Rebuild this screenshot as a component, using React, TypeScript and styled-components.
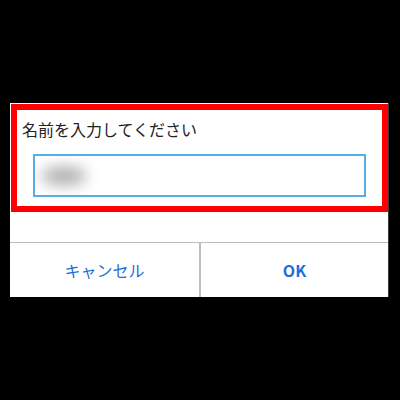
import React from "react";
import styled, { createGlobalStyle } from "styled-components";

const GlobalStyle = createGlobalStyle`
  html, body {
    margin: 0;
    padding: 0;
    background: #000;
  }
`;

const App = () => {
	return (
		<>
			<GlobalStyle />
			<Screen>
				<Dialog>
					<Highlight>
						<Title>名前を入力してください</Title>
						<NameField>
							<Blurred />
						</NameField>
					</Highlight>
					<Spacer />
					<ButtonRow>
						<ActionButton>キャンセル</ActionButton>
						<ActionButton divider bold>OK</ActionButton>
					</ButtonRow>
				</Dialog>
			</Screen>
		</>
	);
};

const Screen = styled.div`
  width: 400px;
  height: 400px;
  box-sizing: border-box;
  padding: 103px 0 0 10px;
  background: #000;
  font-family: "Noto Sans CJK JP", "Noto Sans", sans-serif;
`;

const Dialog = styled.div`
  width: 378px;
  background: #fff;
  display: flex;
  flex-direction: column;
  box-shadow: 1px 0 0 #3a3a3a;
`;

const Highlight = styled.div`
  margin: 1px 0 0 1px;
  border: 6px solid #ff0000;
  padding: 7px 16px 9px 5px;
  display: flex;
  flex-direction: column;
`;

const Title = styled.div`
  font-size: 16px;
  line-height: 24px;
  color: #222;
  margin-bottom: 13px;
`;

const NameField = styled.div`
  height: 43px;
  margin-left: 11px;
  box-sizing: border-box;
  border: 2px solid #56aee6;
  display: flex;
  align-items: center;
  padding-left: 6px;
  overflow: hidden;
`;

const Blurred = styled.div`
  width: 46px;
  height: 20px;
  border-radius: 50%;
  background: #b5b5b5;
  filter: blur(7px);
`;

const Spacer = styled.div`
  height: 30px;
`;

const ButtonRow = styled.div`
  display: grid;
  grid-template-columns: 189px 1fr;
  border-top: 1px solid #bdbdbd;
  height: 55px;
  box-sizing: border-box;
`;

const ActionButton = styled.div<{ divider?: boolean; bold?: boolean }>`
  display: flex;
  align-items: center;
  justify-content: center;
  font-size: 16px;
  color: #1d6fd6;
  font-weight: ${(p) => (p.bold ? 700 : 400)};
  border-left: ${(p) => (p.divider ? "2px solid #bdbdbd" : "none")};
`;

export default App;
